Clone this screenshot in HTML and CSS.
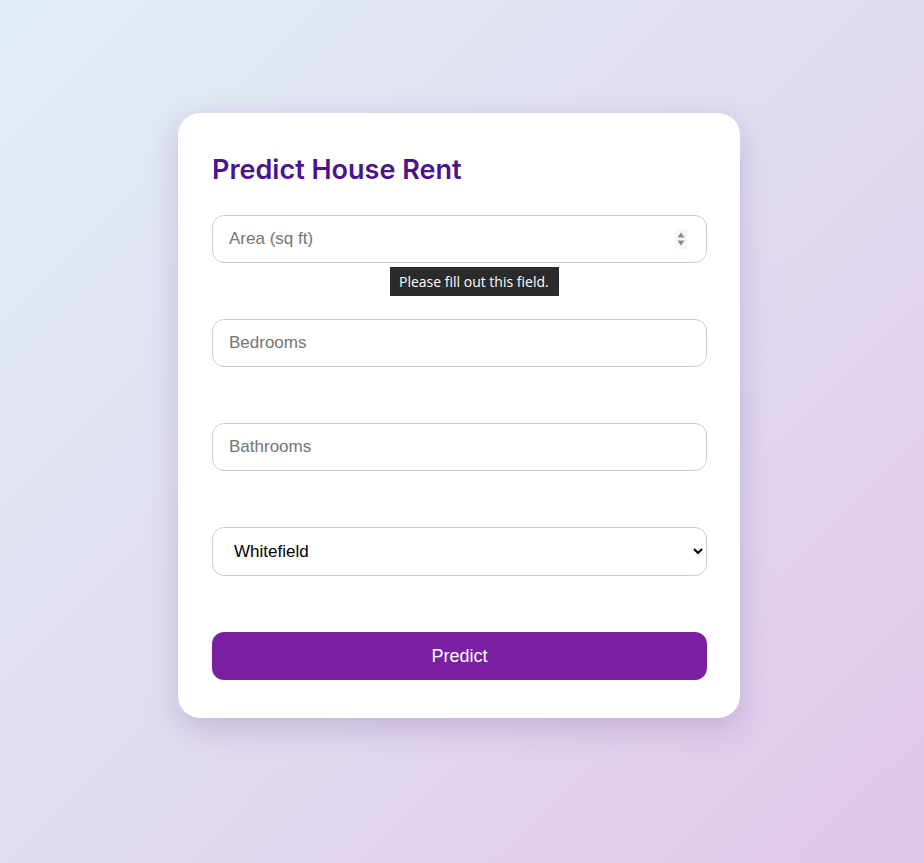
FILE: index.html
```html
<!DOCTYPE html>
<html lang="en">
<head>
<meta charset="utf-8">
<title>Predict House Rent</title>
<link rel="stylesheet" href="styles.css">
</head>
<body>
<main class="page">
  <form class="card">
    <h2 class="title">Predict House Rent</h2>
    <div class="field">
      <input class="input number" type="number" placeholder="Area (sq ft)">
      <svg class="spinner" width="12" height="20" viewBox="0 0 12 20" aria-hidden="true">
        <rect x="0" y="0" width="12" height="20" fill="#f7f7f7"/>
        <path d="M2.5 8.5 L6 3.5 L9.5 8.5 Z" fill="#8a8a8a"/>
        <path d="M2.5 11.5 L6 16.5 L9.5 11.5 Z" fill="#8a8a8a"/>
      </svg>
      <div class="tooltip">Please fill out this field.</div>
    </div>
    <div class="field">
      <input class="input" type="text" placeholder="Bedrooms">
    </div>
    <div class="field">
      <input class="input" type="text" placeholder="Bathrooms">
    </div>
    <div class="field">
      <select class="input select">
        <option>Whitefield</option>
      </select>
    </div>
    <button class="btn" type="button">Predict</button>
  </form>
</main>
</body>
</html>
```
FILE: styles.css
```css
* { box-sizing: border-box; }
html, body { margin: 0; height: 100%; }
body {
  background: linear-gradient(135deg, #e1ecf6 0%, #e0dcf0 50%, #e1c6ec 100%);
  font-family: "Liberation Sans", Arial, sans-serif;
}
.page {
  display: flex;
  justify-content: center;
  align-items: flex-start;
  padding-top: 113px;
  padding-right: 6px;
  min-height: 100%;
}
.card {
  width: 562px;
  background: #fff;
  border-radius: 22px;
  padding: 37px 33px 38px 34px;
  box-shadow: 0 10px 30px rgba(90, 60, 130, 0.22);
  display: flex;
  flex-direction: column;
  gap: 56px;
}
.title {
  margin: 0 0 -31px;
  font-family: Inter, "Noto Sans", sans-serif;
  font-weight: 600;
  font-size: 27px;
  line-height: 40px;
  color: #4a148c;
}
.field { position: relative; }
.input {
  display: block;
  width: 100%;
  height: 48px;
  border: 1px solid #cccccc;
  border-radius: 12px;
  padding: 0 16px;
  font-family: "Liberation Sans", Arial, sans-serif;
  font-size: 17px;
  color: #000;
  background: #fff;
  outline: none;
}
.input::placeholder { color: #757575; }
.number { -moz-appearance: textfield; }
.number::-webkit-inner-spin-button,
.number::-webkit-outer-spin-button { -webkit-appearance: none; margin: 0; }
.spinner {
  position: absolute;
  right: 20px;
  top: 14px;
}
.select {
  height: 49px;
  padding-left: 17px;
}
.tooltip {
  position: absolute;
  left: 178px;
  top: 52px;
  background: #2b2b2b;
  color: #fff;
  font-family: "Open Sans", "DejaVu Sans", sans-serif;
  font-size: 14px;
  line-height: 29px;
  padding: 0 10px 0 9px;
  white-space: nowrap;
}
.btn {
  height: 48px;
  border: none;
  border-radius: 12px;
  background: #7b1fa2;
  color: #fff;
  font-family: "Liberation Sans", Arial, sans-serif;
  font-size: 18px;
  cursor: pointer;
}
```
